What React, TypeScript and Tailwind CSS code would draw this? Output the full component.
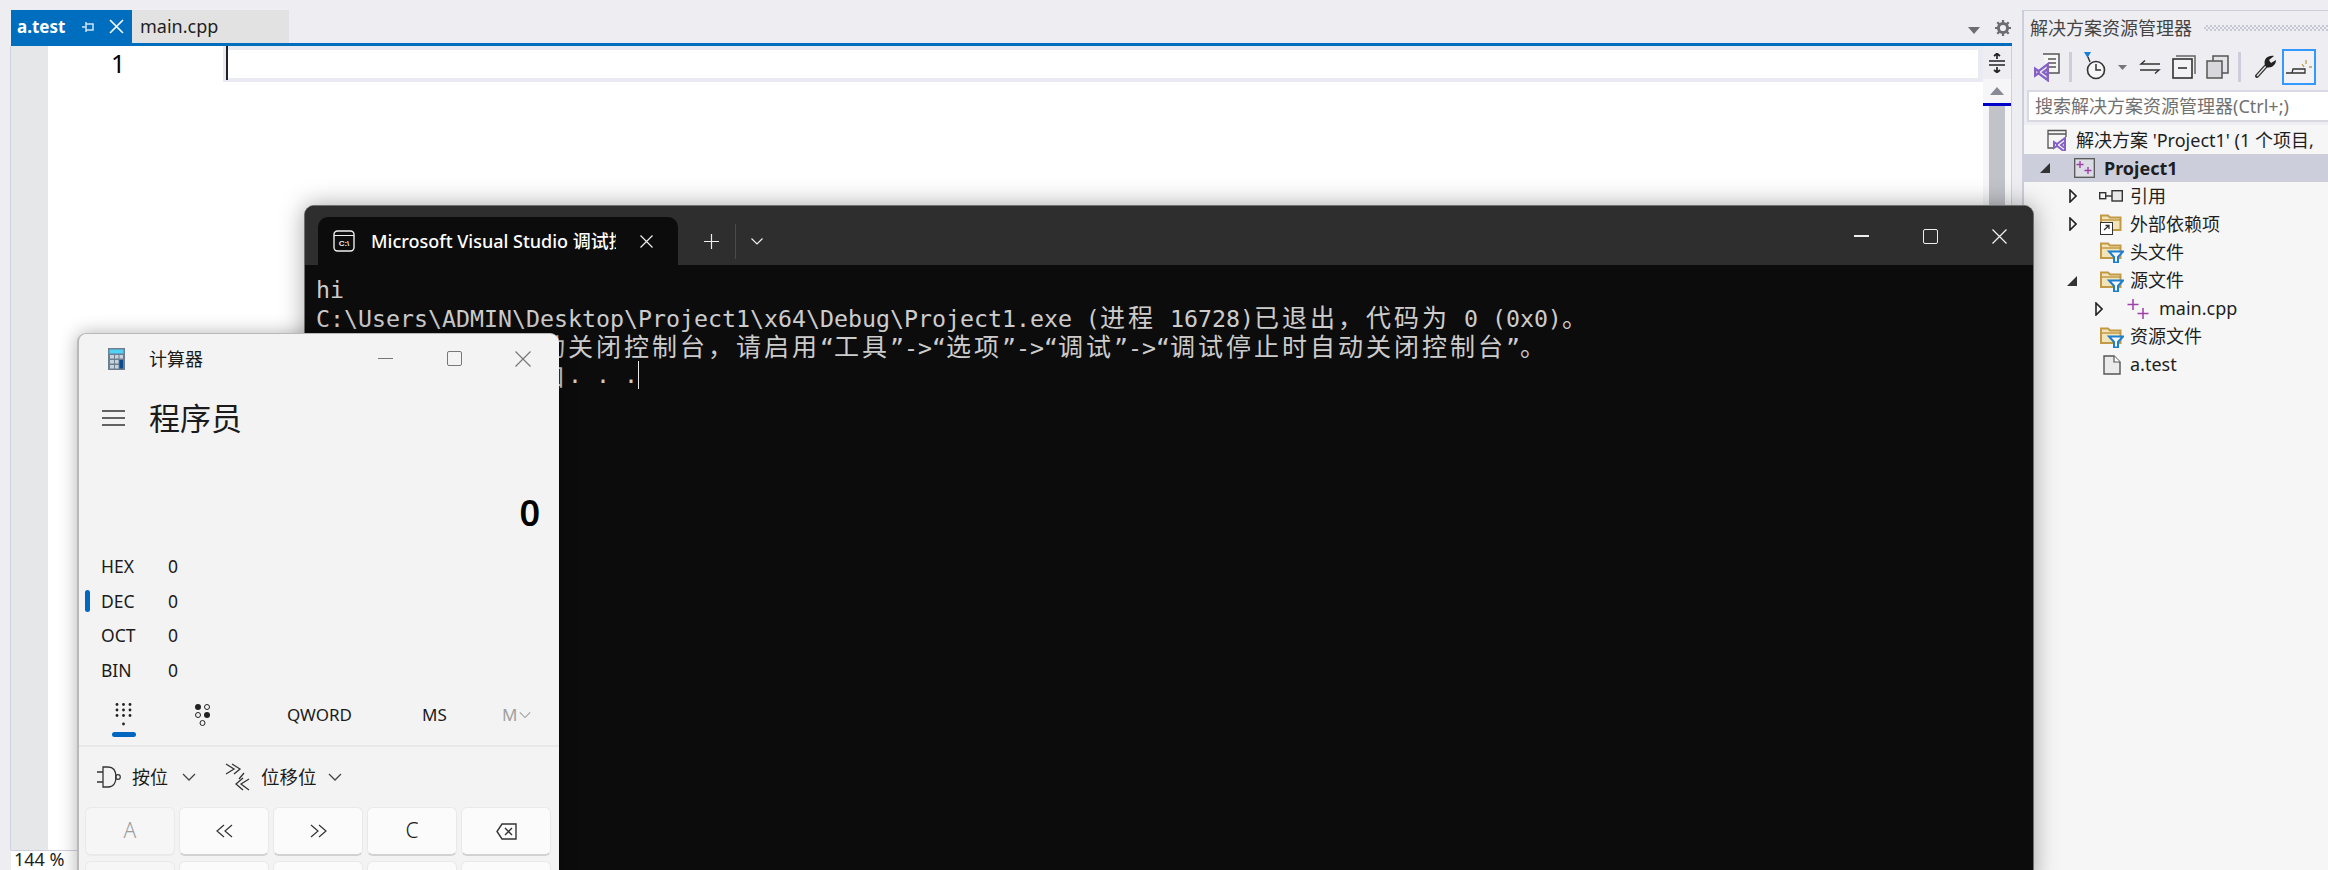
import React from "react";

const sans = "font-['Noto_Sans','Noto_Sans_CJK_SC',sans-serif]";

function VsMark({ x = 0, y = 0, s = 1 }: { x?: number; y?: number; s?: number }) {
  return (
    <g transform={`translate(${x} ${y}) scale(${s})`} fill="none" stroke="#8661c5" strokeWidth="2">
      <path d="M1 5 L1 11 L4 9 L12 15 L12 1 L4 7 Z" />
      <path d="M4 7 L4 9 M8 8 L12 5 L12 11 Z" />
    </g>
  );
}

function Folder({ filter, shortcut }: { filter?: boolean; shortcut?: boolean }) {
  return (
    <svg width="24" height="22" viewBox="0 0 24 22" className="shrink-0">
      <path d="M1 2.5 H8 L10 4.5 H20.5 V17 H1 Z" fill="#f2e3b8" stroke="#c29a45" strokeWidth="2" />
      <path d="M1 7 H20" stroke="#c29a45" strokeWidth="1.5" />
      {filter && (
        <path d="M9 10.5 H23 L18 16 V21.5 H14 V16 Z" fill="#f6f6f6" stroke="#1b7fd0" strokeWidth="2" />
      )}
      {shortcut && (
        <g>
          <rect x="0.5" y="9.5" width="12" height="12" fill="#fff" stroke="#333" />
          <path d="M4 17 L9 12.5 M5.5 12.5 H9 V16" fill="none" stroke="#333" strokeWidth="1.3" />
        </g>
      )}
    </svg>
  );
}

function Arrow({ open }: { open?: boolean }) {
  if (open)
    return (
      <svg width="10" height="10" viewBox="0 0 10 10" className="shrink-0">
        <path d="M10 0 V10 H0 Z" fill="#333" />
      </svg>
    );
  return (
    <svg width="8" height="14" viewBox="0 0 8 14" className="shrink-0">
      <path d="M1 1 L7 7 L1 13 Z" fill="none" stroke="#222" strokeWidth="1.6" />
    </svg>
  );
}

function PlusPlus() {
  return (
    <svg width="22" height="20" viewBox="0 0 22 20" className="shrink-0">
      <path d="M6 0 V11 M0.5 5.5 H11.5 M16 9 V20 M10.5 14.5 H21.5" stroke="#a03eaa" strokeWidth="1.5" fill="none" />
    </svg>
  );
}

function TreeRow({ pad, arrow, gap, children, selected }: { pad: number; arrow?: React.ReactNode; gap: number; children: React.ReactNode; selected?: boolean }) {
  return (
    <div className={`flex items-center h-[28.1px] whitespace-nowrap ${selected ? "bg-[#cccedb]" : ""}`}>
      <span className="shrink-0 flex items-center justify-end" style={{ width: pad }}>{arrow}</span>
      <span className="shrink-0" style={{ width: gap }} />
      {children}
    </div>
  );
}

function Cjk({ children }: { children: React.ReactNode }) {
  return <span className="font-['Noto_Sans_CJK_SC',sans-serif] text-[25px] leading-none tracking-[3px]">{children}</span>;
}

function CalcKey({ children, dim }: { children: React.ReactNode; dim?: boolean }) {
  return (
    <div className={`w-[90px] h-[49px] rounded-[6px] border border-[#e9e9e9] border-b-2 flex items-center justify-center ${dim ? "bg-[#f6f6f6] border-b-[#e9e9e9] text-[#9d9d9d]" : "bg-[#fbfbfb] border-b-[#d2d2d2] text-[#1b1b1b]"}`}>
      {children}
    </div>
  );
}

function CalcRow({ name, active }: { name: string; active?: boolean }) {
  return (
    <div className="relative flex items-center h-[34.5px] pl-[22px] text-[17.5px] text-[#1b1b1b]">
      {active && <span className="absolute left-[6px] top-[6px] w-[5px] h-[22px] rounded-full bg-[#0067c0]" />}
      <span className="w-[67px]">{name}</span>
      <span>0</span>
    </div>
  );
}

function Chevron({ w = 14, color = "#444" }: { w?: number; color?: string }) {
  return (
    <svg width={w} height="8" viewBox="0 0 14 8" className="shrink-0">
      <path d="M1 1 L7 7 L13 1" fill="none" stroke={color} strokeWidth="1.3" />
    </svg>
  );
}

export default function App() {
  return (
    <div className={`relative w-[2328px] h-[870px] overflow-hidden bg-[#eeeef2] text-[#1e1e1e] ${sans}`}>
      <div className="flex h-[870px]">
        {/* editor column */}
        <div className="w-[2012px] pl-[10px] pt-[10px] flex flex-col shrink-0">
          <div className="ml-px h-[36px] border-b-[3px] border-[#006ebe] flex items-start shrink-0 relative">
            <div className="w-[121px] h-[33px] bg-[#006ebe] text-white flex items-center pl-[6px] text-[17px] font-bold">
              <span className="leading-none">a.test</span>
              <svg width="12" height="12" viewBox="0 0 12 12" className="ml-[17px]">
                <path d="M0 6 H4 M4 1 V11 M4 3 H11 V9 H4" fill="none" stroke="#cfe4f5" strokeWidth="1.5" />
              </svg>
              <svg width="15" height="15" viewBox="0 0 15 15" className="ml-[15px]">
                <path d="M1 1 L14 14 M14 1 L1 14" stroke="#fff" strokeWidth="1.6" />
              </svg>
            </div>
            <div className="w-[157px] h-[33px] bg-[#e2e2e2] flex items-center pl-[8px] text-[18px]">main.cpp</div>
            <div className="flex-1" />
            <svg width="12" height="7" viewBox="0 0 12 7" className="mt-[17px] mr-[15px]"><path d="M0 0 H12 L6 7 Z" fill="#6d6d70" /></svg>
            <svg width="16" height="16" viewBox="0 0 16 16" className="mt-[10px] mr-[1px]">
              <circle cx="8" cy="8" r="4.6" fill="none" stroke="#6d6d70" strokeWidth="3" />
              <path d="M8 0 V3 M8 13 V16 M0 8 H3 M13 8 H16 M2.3 2.3 L4.4 4.4 M11.6 11.6 L13.7 13.7 M2.3 13.7 L4.4 11.6 M11.6 4.4 L13.7 2.3" stroke="#6d6d70" strokeWidth="2.2" />
            </svg>
          </div>
          <div className="flex-1 flex border-l border-[#cfd0de] min-h-0">
            <div className="w-[37px] bg-[#e6e7e8] shrink-0" />
            <div className="flex-1 flex items-start bg-white min-w-0">
              <div className="w-[175px] h-[36px] pl-[63px] flex items-center text-[25px] text-black shrink-0">1</div>
              <div className="relative flex-1 h-[36px] border-t-[4px] border-b-[4px] border-l-[3px] border-r-[5px] border-[#eaeaf2] bg-white">
                <span className="absolute -top-[4px] left-0 w-[2px] h-[34px] bg-[#222]" />
              </div>
            </div>
            <div className="w-[29px] shrink-0 flex flex-col bg-[#f6f6f8] border-r border-[#cfd0de]">
              <div className="h-[33px] bg-[#eeeef2] flex items-center justify-center shrink-0">
                <svg width="16" height="20" viewBox="0 0 16 20">
                  <path d="M0 8 H16 M0 12 H16 M8 0.5 V6 M8 14 V19.5 M5 3 L8 0.5 L11 3 M5 17 L8 19.5 L11 17" fill="none" stroke="#222" strokeWidth="1.7" />
                </svg>
              </div>
              <div className="h-[24px] flex items-center justify-center shrink-0">
                <svg width="14" height="8" viewBox="0 0 14 8"><path d="M0 8 L7 0 L14 8 Z" fill="#8a8a96" /></svg>
              </div>
              <div className="h-[3px] bg-[#0000c8] shrink-0" />
              <div className="flex-1 ml-[6px] mr-[6px] bg-[#c2c3c9]" />
            </div>
          </div>
          <div className="h-[20px] shrink-0 ml-px border-t border-[#cfd0de] bg-white pl-[3px] text-[18px] leading-[17px] overflow-visible whitespace-nowrap">144 %</div>
        </div>
        <div className="w-[10px] shrink-0" />
        {/* solution explorer */}
        <div className="flex-1 mt-[10px] border-l-2 border-t border-[#cccedb] flex flex-col min-w-0 overflow-hidden">
          <div className="h-[34px] flex items-center pl-[6px] text-[18px] text-[#444] shrink-0 whitespace-nowrap">
            <span>解决方案资源管理器</span>
            <span className="ml-[12px] flex-1 h-[6px] bg-[repeating-conic-gradient(#c8c8d4_0_25%,transparent_0_50%)] bg-[length:4px_4px]" />
          </div>
          <div className="h-[44px] flex items-center pl-[10px] shrink-0">
            <svg width="26" height="30" viewBox="0 0 26 30" className="shrink-0">
              <path d="M9 2 H25 V21 H13" fill="#f6f6f6" stroke="#555" strokeWidth="1.5" />
              <path d="M14 7 H22 M14 11 H22 M14 15 H22" stroke="#555" strokeWidth="1.5" />
              <VsMark x={0} y={11} s={1.15} />
            </svg>
            <span className="ml-[9px] w-[3px] h-[30px] bg-[#cccedb] shrink-0" />
            <svg width="34" height="32" viewBox="0 0 34 32" className="ml-[10px] shrink-0">
              <path d="M2 1 H9 L5.5 7 Z" fill="#1b7fd0" />
              <circle cx="14" cy="19" r="8.5" fill="#f6f6f6" stroke="#333" strokeWidth="1.6" />
              <path d="M14 13 V19 H19" fill="none" stroke="#333" strokeWidth="1.5" />
              <path d="M6 6 L8 11" stroke="#333" strokeWidth="1.4" />
            </svg>
            <svg width="9" height="5" viewBox="0 0 9 5" className="ml-[2px] shrink-0"><path d="M0 0 H9 L4.5 5 Z" fill="#777" /></svg>
            <svg width="22" height="14" viewBox="0 0 22 14" className="ml-[12px] shrink-0">
              <path d="M21 4 H2 L6 0.5 M1 10 H20 L16 13.5" fill="none" stroke="#333" strokeWidth="1.4" />
            </svg>
            <svg width="24" height="24" viewBox="0 0 24 24" className="ml-[11px] shrink-0">
              <path d="M4 1 H23 V19" fill="none" stroke="#666" strokeWidth="1.5" />
              <rect x="1" y="4" width="19" height="19" fill="#f3f3f5" stroke="#333" strokeWidth="1.6" />
              <path d="M6 13 H15" stroke="#333" strokeWidth="1.6" />
            </svg>
            <svg width="23" height="24" viewBox="0 0 23 24" className="ml-[10px] shrink-0">
              <rect x="7" y="1" width="15" height="17" fill="#e4e4e8" stroke="#555" strokeWidth="1.5" />
              <rect x="1" y="6" width="15" height="17" fill="#d8d8dc" stroke="#555" strokeWidth="1.5" />
            </svg>
            <span className="ml-[9px] w-[3px] h-[30px] bg-[#cccedb] shrink-0" />
            <svg width="22" height="24" viewBox="0 0 22 24" className="ml-[14px] shrink-0">
              <path d="M2 21 L11 11" stroke="#333" strokeWidth="4" strokeLinecap="round" />
              <path d="M2 21 L11 11" stroke="#eee" strokeWidth="1.2" />
              <path d="M10 10 C8 4 13 0 19 1 L14 5 L16 8 L21 5 C21 10 16 14 11 12 Z" fill="#222" />
            </svg>
            <div className="ml-[5px] w-[34px] h-[36px] border-2 border-[#3399ff] bg-[#f2f2f6] flex items-center justify-center shrink-0">
              <svg width="26" height="18" viewBox="0 0 26 18">
                <path d="M0 15 H6 L7 11 H19 V15 H6" fill="none" stroke="#333" strokeWidth="1.3" />
                <path d="M16 6 L18 9 M20 2 V6 M23 9 H26" stroke="#c29a45" strokeWidth="1.3" />
              </svg>
            </div>
          </div>
          <div className="h-[32px] ml-[3px] mt-[1px] border-2 border-r-0 border-[#d8d9e3] bg-white flex items-center pl-[6px] text-[18px] text-[#717171] whitespace-nowrap shrink-0">
            搜索解决方案资源管理器(Ctrl+;)
          </div>
          <div className="flex-1 bg-[#f6f6f6] mt-[3px] pt-[1px] text-[18px] text-[#1e1e1e]">
            <TreeRow pad={23} gap={0}>
              <svg width="22" height="22" viewBox="0 0 22 22" className="shrink-0 mr-[7px]">
                <path d="M1 8 V1.5 H19 V8 M1 5 H19" fill="none" stroke="#555" strokeWidth="1.3" />
                <path d="M1 8 V19 H6" fill="none" stroke="#555" strokeWidth="1.3" />
                <VsMark x={6} y={8} s={1} />
              </svg>
              <span>解决方案 'Project1' (1 个项目,</span>
            </TreeRow>
            <TreeRow selected pad={26} gap={24} arrow={<Arrow open />}>
              <svg width="21" height="20" viewBox="0 0 21 20" className="shrink-0 mr-[9px]">
                <rect x="0.7" y="0.7" width="19.6" height="18.6" fill="#dcdce4" stroke="#555" strokeWidth="1.3" />
                <path d="M6 3 V10 M2.5 6.5 H9.5 M14 9 V16 M10.5 12.5 H17.5" stroke="#a03eaa" strokeWidth="1.4" />
              </svg>
              <span className="font-bold">Project1</span>
            </TreeRow>
            <TreeRow pad={53} gap={22} arrow={<Arrow />}>
              <svg width="24" height="12" viewBox="0 0 24 12" className="shrink-0 mr-[7px]">
                <rect x="0.7" y="2.7" width="6" height="6" fill="none" stroke="#333" strokeWidth="1.4" />
                <rect x="13" y="0.7" width="10.3" height="10.3" fill="#e8e8e8" stroke="#333" strokeWidth="1.4" />
                <path d="M7 6 H13" stroke="#333" strokeWidth="1.4" />
              </svg>
              <span>引用</span>
            </TreeRow>
            <TreeRow pad={53} gap={23} arrow={<Arrow />}>
              <span className="mr-[6px] flex"><Folder shortcut /></span>
              <span>外部依赖项</span>
            </TreeRow>
            <TreeRow pad={53} gap={23}>
              <span className="mr-[6px] flex"><Folder filter /></span>
              <span>头文件</span>
            </TreeRow>
            <TreeRow pad={53} gap={23} arrow={<Arrow open />}>
              <span className="mr-[6px] flex"><Folder filter /></span>
              <span>源文件</span>
            </TreeRow>
            <TreeRow pad={79} gap={24} arrow={<Arrow />}>
              <span className="mr-[10px] flex"><PlusPlus /></span>
              <span>main.cpp</span>
            </TreeRow>
            <TreeRow pad={53} gap={23}>
              <span className="mr-[6px] flex"><Folder filter /></span>
              <span>资源文件</span>
            </TreeRow>
            <TreeRow pad={53} gap={26}>
              <svg width="18" height="20" viewBox="0 0 18 20" className="shrink-0 mr-[9px]">
                <path d="M1 1 H11 L17 7 V19 H1 Z" fill="#ebebeb" stroke="#555" strokeWidth="1.4" />
                <path d="M11 1 V7 H17" fill="#fff" stroke="#555" strokeWidth="1.2" />
              </svg>
              <span>a.test</span>
            </TreeRow>
          </div>
        </div>
      </div>

      {/* terminal window */}
      <div className="absolute left-[304px] top-[205px] w-[1730px] h-[680px] rounded-t-[10px] bg-[#0c0c0c] border border-[#6f6f6f] shadow-[0_0_24px_rgba(0,0,0,0.35)] flex flex-col overflow-hidden">
        <div className="h-[59px] bg-[#2e2e2e] flex items-end pl-[13px] shrink-0">
          <div className="w-[360px] h-[48px] bg-[#0c0c0c] rounded-t-[10px] flex items-center pl-[15px] shrink-0">
            <svg width="22" height="22" viewBox="0 0 22 22" className="shrink-0">
              <rect x="1" y="1" width="20" height="20" rx="3.5" fill="none" stroke="#eee" strokeWidth="1.4" />
              <path d="M1 5.5 H21" stroke="#eee" strokeWidth="1.2" />
              <text x="11" y="16" fontSize="8" fontWeight="700" fill="#eee" textAnchor="middle" fontFamily="'Liberation Sans',sans-serif">C:\</text>
            </svg>
            <div className="ml-[16px] w-[245px] overflow-hidden whitespace-nowrap text-[18px] font-medium text-white">Microsoft Visual Studio 调试控制台</div>
            <svg width="13" height="13" viewBox="0 0 13 13" className="ml-[24px] shrink-0"><path d="M0.5 0.5 L12.5 12.5 M12.5 0.5 L0.5 12.5" stroke="#eee" strokeWidth="1.2" /></svg>
          </div>
          <div className="flex items-center h-[48px] shrink-0 relative">
            <svg width="15" height="15" viewBox="0 0 15 15" className="ml-[26px]"><path d="M7.5 0 V15 M0 7.5 H15" stroke="#eee" strokeWidth="1.2" /></svg>
            <span className="ml-[16px] w-px h-[35px] bg-[#4a4a4a]" />
            <svg width="12" height="7" viewBox="0 0 12 7" className="ml-[15px]"><path d="M0.5 0.5 L6 6 L11.5 0.5" fill="none" stroke="#eee" strokeWidth="1.2" /></svg>
          </div>
          <div className="flex-1" />
          <div className="flex items-center h-[59px] shrink-0 pr-[26px] pt-[1px]">
            <span className="w-[15px] h-[1.5px] bg-[#eee]" />
            <span className="ml-[54px] w-[15px] h-[15px] rounded-[2px] border-[1.5px] border-[#eee]" />
            <svg width="15" height="15" viewBox="0 0 15 15" className="ml-[54px]"><path d="M0.5 0.5 L14.5 14.5 M14.5 0.5 L0.5 14.5" stroke="#eee" strokeWidth="1.3" /></svg>
          </div>
        </div>
        <div className="flex-1 pl-[11px] pt-[11px] font-['DejaVu_Sans_Mono',monospace] text-[23.25px] leading-[28.3px] text-[#cccccc] whitespace-pre">
          <div className="h-[28.3px]">hi</div>
          <div className="h-[28.3px]">C:\Users\ADMIN\Desktop\Project1\x64\Debug\Project1.exe (<Cjk>进程</Cjk> 16728)<Cjk>已退出，代码为</Cjk> 0 (0x0)<Cjk>。</Cjk></div>
          <div className="h-[28.3px]"><Cjk>要在调试停止时自动关闭控制台，请启用</Cjk>“<Cjk>工具</Cjk>”-&gt;“<Cjk>选项</Cjk>”-&gt;“<Cjk>调试</Cjk>”-&gt;“<Cjk>调试停止时自动关闭控制台</Cjk>”<Cjk>。</Cjk></div>
          <div className="h-[28.3px] flex items-center"><Cjk>按任意键关闭此窗口</Cjk>. . .<span className="w-px h-[28px] bg-[#e8e8e8]" /></div>
        </div>
      </div>

      {/* calculator window */}
      <div className="absolute left-[77px] top-[333px] w-[482px] h-[560px] rounded-t-[9px] bg-[#f3f3f3] border-l-2 border-t border-[#b9b9b9] shadow-[0_0_18px_rgba(0,0,0,0.3)] flex flex-col overflow-hidden text-[#1b1b1b]">
        <div className="h-[49px] flex items-center pl-[29px] shrink-0">
          <svg width="17" height="22" viewBox="0 0 17 22" className="shrink-0">
            <rect width="17" height="22" fill="#6d7f8f" />
            <rect x="1.5" y="1.5" width="14" height="4" fill="#4fd2f5" />
            <path d="M2 7 H6 V10.5 H2 Z M7 7 H10.5 V10.5 H7 Z M11.5 7 H15 V10.5 H11.5 Z M2 12 H6 V15.5 H2 Z M7 12 H10.5 V15.5 H7 Z M2 17 H6 V20.5 H2 Z M7 17 H10.5 V20.5 H7 Z" fill="#c6d2dc" />
            <rect x="11.5" y="12" width="3.5" height="8.5" fill="#0b4a8c" />
          </svg>
          <span className="ml-[24px] text-[18px] leading-none">计算器</span>
          <div className="flex-1" />
          <div className="flex items-center pr-[28px]">
            <span className="w-[15px] h-[1.5px] bg-[#777]" />
            <span className="ml-[54px] w-[15px] h-[15px] rounded-[2px] border-[1.5px] border-[#777]" />
            <svg width="16" height="16" viewBox="0 0 16 16" className="ml-[53px]"><path d="M0.5 0.5 L15.5 15.5 M15.5 0.5 L0.5 15.5" stroke="#777" strokeWidth="1.2" /></svg>
          </div>
        </div>
        <div className="h-[70px] flex items-center pl-[23px] shrink-0">
          <svg width="23" height="16" viewBox="0 0 23 16" className="shrink-0"><path d="M0 1 H23 M0 8 H23 M0 15 H23" stroke="#333" strokeWidth="1.3" /></svg>
          <span className="ml-[24px] text-[31px] leading-none">程序员</span>
        </div>
        <div className="h-[84px] flex items-end justify-end pr-[19px] text-[36px] font-semibold leading-[48px] text-black shrink-0">0</div>
        <div className="mt-[12px] shrink-0">
          <CalcRow name="HEX" />
          <CalcRow name="DEC" active />
          <CalcRow name="OCT" />
          <CalcRow name="BIN" />
        </div>
        <div className="relative h-[58px] flex items-center shrink-0 text-[18px] whitespace-nowrap">
          <svg width="18" height="23" viewBox="0 0 18 23" className="absolute left-[36px] top-[16px]" fill="#222">
            {[0, 6.5, 13].map((x) => [1.5, 7, 12.5].map((y) => <circle key={`${x}-${y}`} cx={x + 2} cy={y} r="1.4" />))}
            <circle cx="8.5" cy="21" r="1.4" />
          </svg>
          <span className="absolute left-[33px] top-[45px] w-[24px] h-[5px] rounded-full bg-[#0067c0]" />
          <svg width="18" height="23" viewBox="0 0 18 23" className="absolute left-[115px] top-[16px]">
            <circle cx="4" cy="4" r="3" fill="#222" />
            <circle cx="13" cy="4" r="2.5" fill="none" stroke="#222" />
            <circle cx="4" cy="12" r="2.5" fill="none" stroke="#222" />
            <circle cx="13" cy="12" r="3" fill="#222" />
            <circle cx="8.5" cy="20" r="2.5" fill="none" stroke="#222" />
          </svg>
          <span className="absolute left-[208px] top-[15px] text-[17px]">QWORD</span>
          <span className="absolute left-[343px] top-[15px] text-[17px]">MS</span>
          <span className="absolute left-[423px] top-[15px] text-[17px] text-[#a0a0a0] flex items-center">M<span className="ml-[2px]"><Chevron w={12} color="#a0a0a0" /></span></span>
        </div>
        <div className="h-[2px] bg-[#e8e8e8] shrink-0" />
        <div className="h-[60px] flex items-center pl-[18px] text-[18px] shrink-0 whitespace-nowrap">
          <svg width="25" height="22" viewBox="0 0 25 22" className="shrink-0">
            <path d="M0 6 H6 M0 16 H6 M6 1 H11 C17 1 19 6 19 11 C19 16 17 21 11 21 H6 Z" fill="none" stroke="#333" strokeWidth="1.3" />
            <circle cx="21" cy="11" r="2.3" fill="none" stroke="#333" strokeWidth="1.2" />
          </svg>
          <span className="ml-[10px]">按位</span>
          <span className="ml-[14px] flex"><Chevron /></span>
          <svg width="25" height="28" viewBox="0 0 25 28" className="ml-[29px] shrink-0">
            <path d="M1 1 L9 6 L1 11 M7 1 L15 6 L9 11 M19 10 L14 16 M24 16 L16 21 L24 27 M18 15 L11 21 L18 27" fill="none" stroke="#333" strokeWidth="1.3" />
          </svg>
          <span className="ml-[11px] text-[18.5px]">位移位</span>
          <span className="ml-[11px] flex"><Chevron /></span>
        </div>
        <div className="pl-[6px] grid grid-cols-[repeat(5,90px)] gap-x-[4px] gap-y-[5px] text-[21px] font-light">
          <CalcKey dim>A</CalcKey>
          <CalcKey>
            <svg width="17" height="14" viewBox="0 0 17 14"><path d="M8 1 L1 7 L8 13 M16 1 L9 7 L16 13" fill="none" stroke="#333" strokeWidth="1.2" /></svg>
          </CalcKey>
          <CalcKey>
            <svg width="17" height="14" viewBox="0 0 17 14"><path d="M1 1 L8 7 L1 13 M9 1 L16 7 L9 13" fill="none" stroke="#333" strokeWidth="1.2" /></svg>
          </CalcKey>
          <CalcKey>C</CalcKey>
          <CalcKey>
            <svg width="21" height="17" viewBox="0 0 21 17"><path d="M6 1 H20 V16 H6 L1 8.5 Z M9 5 L16 12 M16 5 L9 12" fill="none" stroke="#333" strokeWidth="1.4" /></svg>
          </CalcKey>
          <CalcKey dim>&nbsp;</CalcKey>
          <CalcKey>&nbsp;</CalcKey>
          <CalcKey>&nbsp;</CalcKey>
          <CalcKey>&nbsp;</CalcKey>
          <CalcKey>&nbsp;</CalcKey>
        </div>
      </div>
    </div>
  );
}
